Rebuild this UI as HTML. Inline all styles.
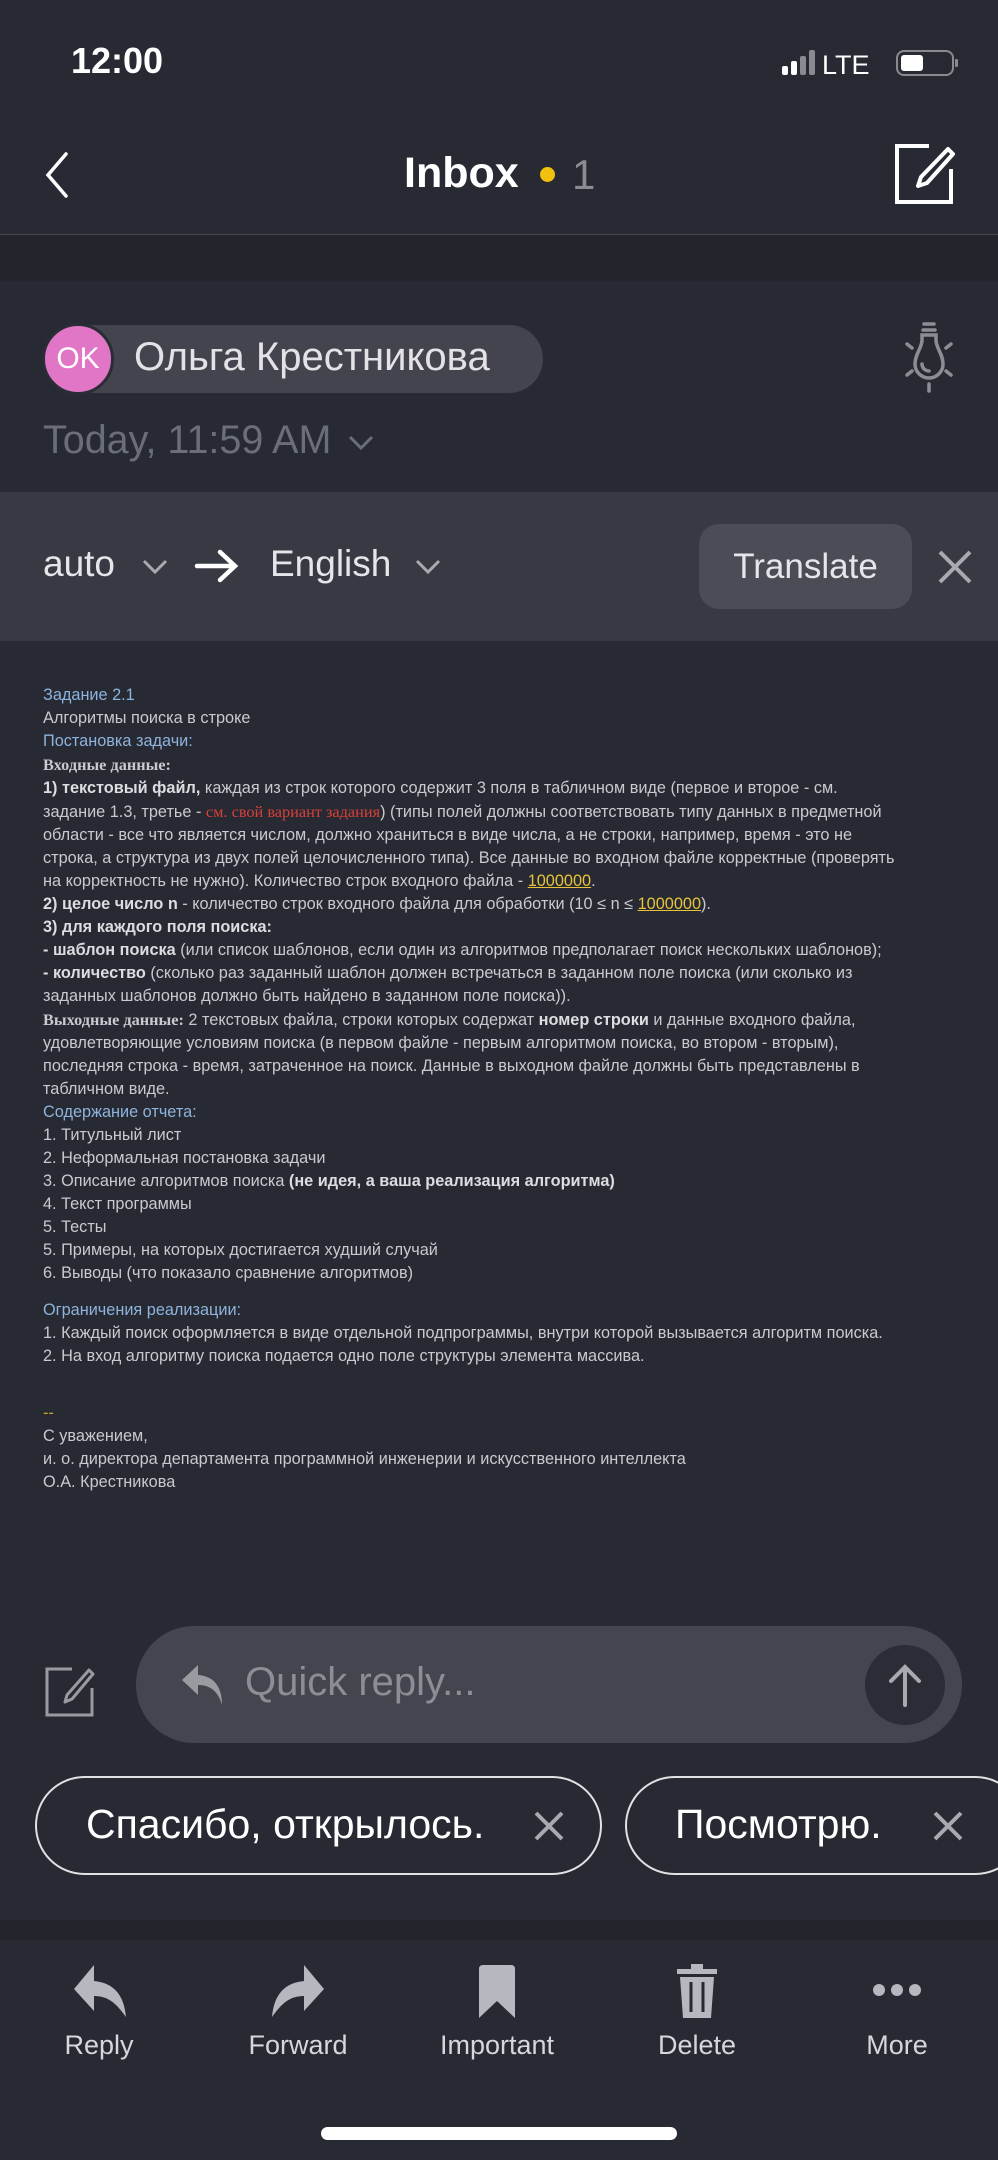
<!DOCTYPE html>
<html><head><meta charset="utf-8">
<style>
*{margin:0;padding:0;box-sizing:border-box}
body{width:998px;height:2160px;background:#272a33;position:relative;overflow:hidden;font-family:"Liberation Sans","Noto Sans CJK SC",sans-serif;color:#e6e6ea}
.a{position:absolute}
.body{position:absolute;left:43px;font-size:16.3px;line-height:23px;color:#c9cacf;white-space:nowrap}
.bl{color:#8eb3dc}
.b{font-weight:bold;color:#dcdde0}
.sf{font-family:"Liberation Serif",serif;font-weight:bold;color:#c9cacf}
.red{font-family:"Liberation Serif",serif;color:#d9403a}
.y{color:#e8c33a;text-decoration:underline}
.lbl{position:absolute;top:2030px;width:200px;text-align:center;font-size:27px;color:#d6d7dc}
</style></head><body>
<!-- status bar -->
<div class="a" style="left:71px;top:40px;font-size:36px;font-weight:bold;color:#fff">12:00</div>
<svg class="a" style="left:780px;top:48px" width="180" height="30" viewBox="0 0 180 30">
<rect x="2" y="18" width="6" height="9" rx="2" fill="#fff"/><rect x="11" y="13" width="6" height="14" rx="2" fill="#fff"/><rect x="20" y="8" width="6" height="19" rx="2" fill="#8a8b90"/><rect x="29" y="2" width="6" height="25" rx="2" fill="#8a8b90"/>
<text x="42" y="26" font-family="Liberation Sans" font-size="27" fill="#fff">LTE</text>
<rect x="117" y="3" width="56" height="24" rx="7" fill="none" stroke="#8a8b90" stroke-width="2"/><rect x="121" y="7" width="22" height="16" rx="3" fill="#fff"/><rect x="175" y="11" width="3" height="8" rx="1" fill="#8a8b90"/>
</svg>
<!-- nav -->
<svg class="a" style="left:40px;top:150px" width="32" height="50"><path d="M26 4 L8 25 L26 46" fill="none" stroke="#fff" stroke-width="3.5" stroke-linecap="round"/></svg>
<div class="a" style="left:404px;top:149px;font-size:43px;font-weight:bold;color:#fff">Inbox</div>
<div class="a" style="left:540px;top:167px;width:15px;height:15px;border-radius:50%;background:#f2c10f"></div>
<div class="a" style="left:572px;top:151px;font-size:42px;color:#8b8c92">1</div>
<svg class="a" style="left:893px;top:143px" width="62" height="62" viewBox="0 0 62 62"><path d="M36 3 H4 V59 H58 V26" fill="none" stroke="#fff" stroke-width="4"/><path d="M55 6 L60 11 L34 40 L25 43 L28 34 Z" fill="none" stroke="#fff" stroke-width="4" stroke-linejoin="round"/></svg>
<div class="a" style="left:0;top:234px;width:998px;height:1px;background:#474a52"></div>
<div class="a" style="left:0;top:235px;width:998px;height:46px;background:#22252c"></div>
<!-- sender -->
<div class="a" style="left:43px;top:325px;width:500px;height:68px;border-radius:34px;background:#43444e"></div>
<div class="a" style="left:42px;top:323px;width:72px;height:72px;border-radius:50%;background:#e276c6;border:3px solid #2b2d36;text-align:center;line-height:66px;font-size:30px;color:#fff">OK</div>
<div class="a" style="left:134px;top:335px;font-size:40px;color:#e3e3e7">Ольга Крестникова</div>
<svg class="a" style="left:900px;top:320px" width="58" height="76" viewBox="0 0 58 76"><g fill="none" stroke="#8d8e95" stroke-width="3.5" stroke-linecap="round"><path d="M24 4 H34 M23 10 H35"/><path d="M22 15 H36 V20 C36 28 43 34 43 44 A14 14 0 0 1 15 44 C15 34 22 28 22 20 Z"/><path d="M22 44 A7 7 0 0 0 29 51"/><path d="M7 24 L12 28 M51 24 L46 28 M7 55 L12 51 M51 55 L46 51 M29 64 V71"/></g></svg>
<div class="a" style="left:43px;top:418px;font-size:39.5px;color:#6b6e76">Today, 11:59 AM</div>
<svg class="a" style="left:347px;top:432px" width="28" height="20"><path d="M3 5 L14 16 L25 5" fill="none" stroke="#6b6e76" stroke-width="3"/></svg>
<!-- translate -->
<div class="a" style="left:0;top:492px;width:998px;height:149px;background:#373a43"></div>
<div class="a" style="left:43px;top:543px;font-size:37px;color:#e6e6ea">auto</div>
<svg class="a" style="left:141px;top:556px" width="28" height="20"><path d="M3 5 L14 16 L25 5" fill="none" stroke="#a9aab0" stroke-width="3"/></svg>
<svg class="a" style="left:194px;top:548px" width="46" height="36"><path d="M3 18 H40 M26 4 L41 18 L26 32" fill="none" stroke="#fff" stroke-width="4.5" stroke-linecap="round"/></svg>
<div class="a" style="left:270px;top:543px;font-size:37px;color:#e6e6ea">English</div>
<svg class="a" style="left:414px;top:556px" width="28" height="20"><path d="M3 5 L14 16 L25 5" fill="none" stroke="#a9aab0" stroke-width="3"/></svg>
<div class="a" style="left:699px;top:524px;width:213px;height:85px;border-radius:20px;background:#4a4c56;text-align:center;line-height:85px;font-size:35px;color:#e6e6ea">Translate</div>
<svg class="a" style="left:936px;top:548px" width="38" height="38"><path d="M4 4 L34 34 M34 4 L4 34" stroke="#a9aab0" stroke-width="4"/></svg>
<!-- body -->
<div class="body" style="top:684px">
<span class="bl">Задание 2.1</span><br>
Алгоритмы поиска в строке<br>
<span class="bl">Постановка задачи:</span><br>
<span class="sf">Входные данные:</span><br>
<span class="b">1) текстовый файл,</span> каждая из строк которого содержит 3 поля в табличном виде (первое и второе - см.<br>
задание 1.3, третье - <span class="red">см. свой вариант задания</span>) (типы полей должны соответствовать типу данных в предметной<br>
области - все что является числом, должно храниться в виде числа, а не строки, например, время - это не<br>
строка, а структура из двух полей целочисленного типа). Все данные во входном файле корректные (проверять<br>
на корректность не нужно). Количество строк входного файла - <span class="y">1000000</span>.<br>
<span class="b">2) целое число n</span> - количество строк входного файла для обработки (10 ≤ n ≤ <span class="y">1000000</span>).<br>
<span class="b">3) для каждого поля поиска:</span><br>
<span class="b">- шаблон поиска</span> (или список шаблонов, если один из алгоритмов предполагает поиск нескольких шаблонов);<br>
<span class="b">- количество</span> (сколько раз заданный шаблон должен встречаться в заданном поле поиска (или сколько из<br>
заданных шаблонов должно быть найдено в заданном поле поиска)).<br>
<span class="sf">Выходные данные:</span> 2 текстовых файла, строки которых содержат <span class="b">номер строки</span> и данные входного файла,<br>
удовлетворяющие условиям поиска (в первом файле - первым алгоритмом поиска, во втором - вторым),<br>
последняя строка - время, затраченное на поиск. Данные в выходном файле должны быть представлены в<br>
табличном виде.<br>
<span class="bl">Содержание отчета:</span><br>
1. Титульный лист<br>
2. Неформальная постановка задачи<br>
3. Описание алгоритмов поиска <span class="b">(не идея, а ваша реализация алгоритма)</span><br>
4. Текст программы<br>
5. Тесты<br>
5. Примеры, на которых достигается худший случай<br>
6. Выводы (что показало сравнение алгоритмов)
</div>
<div class="body" style="top:1299px">
<span class="bl">Ограничения реализации:</span><br>
1. Каждый поиск оформляется в виде отдельной подпрограммы, внутри которой вызывается алгоритм поиска.<br>
2. На вход алгоритму поиска подается одно поле структуры элемента массива.
</div>
<div class="body" style="top:1402px">
<span style="color:#c9a52a">--</span><br>
С уважением,<br>
и. о. директора департамента программной инженерии и искусственного интеллекта<br>
О.А. Крестникова
</div>
<!-- quick reply -->
<svg class="a" style="left:44px;top:1666px" width="52" height="52" viewBox="0 0 52 52"><path d="M28 3 H3 V49 H48 V22" fill="none" stroke="#9a9ba1" stroke-width="3"/><path d="M45 4 L49 8 L28 33 L21 36 L23 29 Z" fill="none" stroke="#9a9ba1" stroke-width="3" stroke-linejoin="round"/></svg>
<div class="a" style="left:136px;top:1626px;width:826px;height:117px;border-radius:58px;background:#44454f"></div>
<svg class="a" style="left:180px;top:1663px" width="46" height="44" viewBox="0 0 46 44"><path d="M18 2 L2 17 L18 32 V22 C30 22 38 28 42 42 C42 24 34 13 18 12 Z" fill="#9a9ba1"/></svg>
<div class="a" style="left:245px;top:1660px;font-size:40px;color:#8d8e95">Quick reply...</div>
<div class="a" style="left:865px;top:1645px;width:80px;height:80px;border-radius:50%;background:#2a2d35"></div>
<svg class="a" style="left:885px;top:1663px" width="40" height="44"><path d="M20 42 V4 M6 18 L20 4 L34 18" fill="none" stroke="#a9aab0" stroke-width="4" stroke-linecap="round"/></svg>
<!-- suggestions -->
<div class="a" style="left:35px;top:1776px;width:567px;height:99px;border-radius:50px;border:2.5px solid #e2e2e4"></div>
<div class="a" style="left:86px;top:1801px;font-size:41px;color:#fff">Спасибо, открылось.</div>
<svg class="a" style="left:533px;top:1810px" width="32" height="32"><path d="M3 3 L29 29 M29 3 L3 29" stroke="#a9aab0" stroke-width="4"/></svg>
<div class="a" style="left:625px;top:1776px;width:400px;height:99px;border-radius:50px;border:2.5px solid #e2e2e4"></div>
<div class="a" style="left:675px;top:1801px;font-size:41px;color:#fff">Посмотрю.</div>
<svg class="a" style="left:932px;top:1810px" width="32" height="32"><path d="M3 3 L29 29 M29 3 L3 29" stroke="#a9aab0" stroke-width="4"/></svg>
<!-- toolbar -->
<div class="a" style="left:0;top:1920px;width:998px;height:20px;background:#22252c"></div>
<svg class="a" style="left:72px;top:1963px" width="56" height="56" viewBox="0 0 56 56"><path d="M22 2 L2 26 L22 48 V33 C36 33 44 40 54 54 C52 32 42 20 22 18 Z" fill="#b6b7bf"/></svg>
<svg class="a" style="left:270px;top:1963px" width="56" height="56" viewBox="0 0 56 56"><path d="M34 2 L54 26 L34 48 V33 C20 33 12 40 2 54 C4 32 14 20 34 18 Z" fill="#b6b7bf"/></svg>
<svg class="a" style="left:477px;top:1963px" width="40" height="56" viewBox="0 0 40 56"><path d="M2 6 Q2 2 6 2 H34 Q38 2 38 6 V55 L20 38 L2 55 Z" fill="#b6b7bf"/></svg>
<svg class="a" style="left:675px;top:1962px" width="44" height="58" viewBox="0 0 44 58"><path d="M16 2 H28 V7 H42 V12 H2 V7 H16 Z" fill="#b6b7bf"/><path d="M5 15 H39 L36 56 H8 Z" fill="#b6b7bf"/><path d="M16 20 V50 M28 20 V50" stroke="#272a33" stroke-width="3"/></svg>
<svg class="a" style="left:872px;top:1983px" width="50" height="14"><circle cx="7" cy="7" r="6" fill="#b6b7bf"/><circle cx="25" cy="7" r="6" fill="#b6b7bf"/><circle cx="43" cy="7" r="6" fill="#b6b7bf"/></svg>
<div class="lbl" style="left:-1px">Reply</div>
<div class="lbl" style="left:198px">Forward</div>
<div class="lbl" style="left:397px">Important</div>
<div class="lbl" style="left:597px">Delete</div>
<div class="lbl" style="left:797px">More</div>
<div class="a" style="left:321px;top:2127px;width:356px;height:13px;border-radius:7px;background:#fff"></div>
</body></html>
